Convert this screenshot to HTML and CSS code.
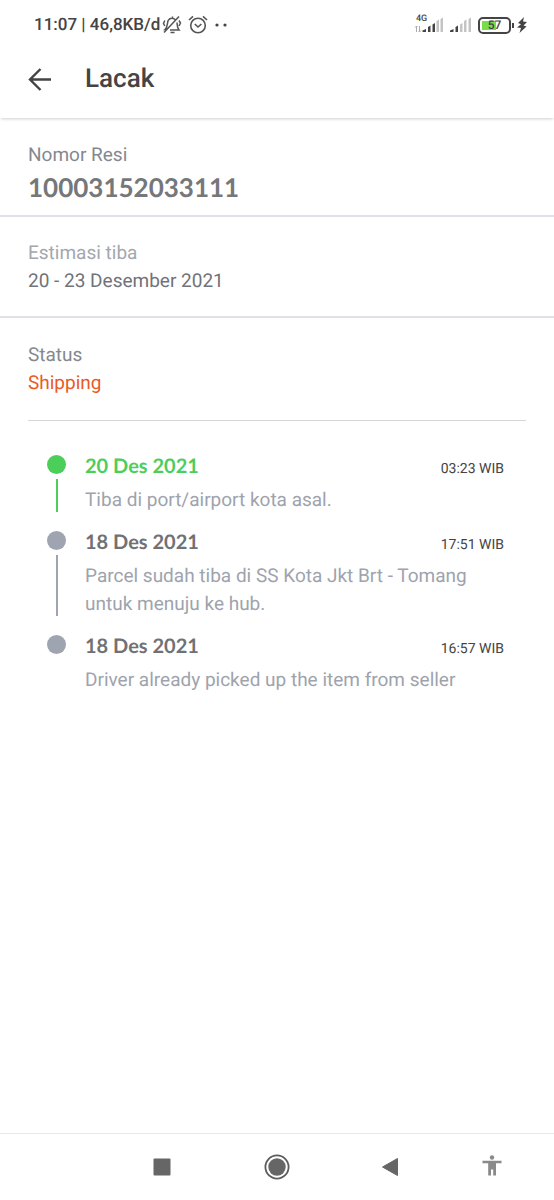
FILE: index.html
```html
<!DOCTYPE html>
<html lang="id">
<head>
<meta charset="utf-8">
<meta name="viewport" content="width=device-width, initial-scale=1">
<title>Lacak</title>
<link rel="stylesheet" href="styles.css">
</head>
<body>
<div class="status-bar">
  <div class="status-left">
    <span class="clock">11:07 | 46,8KB/d</span>
    <svg class="icon-mute" width="20" height="20" viewBox="0 0 20 20" fill="none" stroke="#555" stroke-width="1.5">
      <path d="M14 5.500C12 2.600 8 2.600 6.200 5.400C5 8 6 12 3 14.500H5M8 15H17C15 12.800 15.300 10 15 7.500M8.500 17.500H12.500M10.500 3V1.500M17 1.500L2 17.500M2.800 5.500L1.500 8.500L2.800 11M17 5.500L18.500 8L17 11"/>
    </svg>
    <svg width="20" height="20" viewBox="0 0 20 20" fill="none" stroke="#555" stroke-width="1.600">
      <circle cx="10" cy="10.500" r="7.300"/><path d="M6.800 9L10 12L13.400 9M1 5L5 1.300M15 1.300L19 5"/>
    </svg>
    <svg width="14" height="20" viewBox="0 0 14 20" fill="#444"><circle cx="3" cy="10" r="1.600"/><circle cx="11" cy="10" r="1.600"/></svg>
  </div>
  <div class="status-right">
    <div class="mobile">
      <span class="network">4G</span>
      <svg width="30" height="18" viewBox="0 0 30 18">
        <path d="M2.500 16V10M1 11.500L2.500 10L3.500 11M5.500 10V16M7 14.500L5.500 16L4.500 15" fill="none" stroke="#aaa"/>
        <path d="M8.500 14.500L12 13V16H8.500ZM14 11L16.500 9.500V16H14ZM18.500 8.500L21 7V16H18.500Z" fill="#444"/>
        <path d="M22.500 5L25 3.500V16H22.500ZM26.500 3L29 1.500V16H26.500Z" fill="#c4c4c4"/>
      </svg>
    </div>
    <svg width="22" height="18" viewBox="0 0 22 18">
      <path d="M0 14.500L3.500 13V16H0ZM5.500 11L8 9.500V16H5.500Z" fill="#444"/>
      <path d="M10 8.500L12.500 7V16H10ZM14 5L16.500 3.500V16H14ZM18.500 3L21 1.500V16H18.500Z" fill="#c4c4c4"/>
    </svg>
    <div class="battery"><span class="charge" style="width:57%"></span><span class="percent">57</span></div>
    <svg class="bolt" width="14" height="18" viewBox="0 0 14 18"><path d="M9 1L3 7L6 8.200L2 11.500L6 12L4.500 17L11.500 10.500L8.500 9.500L12 6L8 5.500Z" fill="#444"/></svg>
  </div>
</div>

<header class="app-bar">
  <button class="back" aria-label="Kembali">
    <svg width="24" height="24" viewBox="0 0 24 24" fill="none" stroke="#444" stroke-width="2.400"><path d="M23 11.500H2.500M12.500 1L2 11.500L12.500 22"/></svg>
  </button>
  <h1 class="title">Lacak</h1>
</header>

<main class="content">
  <section class="info receipt">
    <h2 class="label">Nomor Resi</h2>
    <p class="number">10003152033111</p>
  </section>
  <section class="info estimate">
    <h2 class="label label-light">Estimasi tiba</h2>
    <p class="value">20 - 23 Desember 2021</p>
  </section>
  <section class="state">
    <h2 class="label">Status</h2>
    <p class="value value-shipping">Shipping</p>
  </section>
  <ol class="timeline">
    <li class="event event-active">
      <div class="rail"><span class="dot"></span><span class="line"></span></div>
      <div class="details">
        <div class="event-head"><h3 class="date">20 Des 2021</h3><time class="time">03:23 WIB</time></div>
        <p class="text">Tiba di port/airport kota asal.</p>
      </div>
    </li>
    <li class="event">
      <div class="rail"><span class="dot"></span><span class="line"></span></div>
      <div class="details">
        <div class="event-head"><h3 class="date">18 Des 2021</h3><time class="time">17:51 WIB</time></div>
        <p class="text">Parcel sudah tiba di SS Kota Jkt Brt - Tomang untuk menuju ke hub.</p>
      </div>
    </li>
    <li class="event">
      <div class="rail"><span class="dot"></span></div>
      <div class="details">
        <div class="event-head"><h3 class="date">18 Des 2021</h3><time class="time">16:57 WIB</time></div>
        <p class="text">Driver already picked up the item from seller</p>
      </div>
    </li>
  </ol>
</main>

<nav class="nav-bar">
  <button class="nav-button" aria-label="Aplikasi terbaru"><svg width="28" height="28" viewBox="0 0 28 28"><rect x="5.500" y="5.500" width="17" height="17" rx="1" fill="#666"/></svg></button>
  <button class="nav-button" aria-label="Beranda"><svg width="28" height="28" viewBox="0 0 28 28"><circle cx="15" cy="14" r="11.600" fill="none" stroke="#5c5c5c" stroke-width="1.800"/><circle cx="15" cy="14" r="8.700" fill="#666"/></svg></button>
  <button class="nav-button" aria-label="Kembali"><svg width="28" height="28" viewBox="0 0 28 28"><path d="M6.500 14L21.500 5.500V22.500Z" fill="#666" stroke="#666" stroke-linejoin="round"/></svg></button>
  <button class="nav-button" aria-label="Aksesibilitas"><svg width="28" height="28" viewBox="0 0 28 28" fill="#8a8a8a"><circle cx="14" cy="4.500" r="2.200"/><path d="M4.500 7.800H23.500V10.200H18V22.500H15.200V16.500H13V22.500H10.200V10.200H4.500Z"/></svg></button>
</nav>
</body>
</html>
```
FILE: styles.css
```css
* { box-sizing: border-box; }
body {
  margin: 0;
  min-height: 100vh;
  display: flex;
  flex-direction: column;
  background: #fff;
  color: #444;
  font-family: Roboto, "Liberation Sans", sans-serif;
  text-rendering: geometricPrecision;
}
h1, h2, h3, p, ol { margin: 0; padding: 0; }
button { border: 0; padding: 0; background: none; display: flex; }
svg { display: block; flex: none; }

.status-bar {
  height: 48px;
  padding: 2px 25px 0 34px;
  display: flex;
  justify-content: space-between;
  align-items: center;
}
.status-left { display: flex; align-items: center; gap: 6px; }
.clock { font-size: 17px; font-weight: 500; line-height: 20px; white-space: nowrap; }
.icon-mute { margin-left: -4px; }
.status-right { display: flex; align-items: center; gap: 6px; }
.mobile { position: relative; }
.network {
  position: absolute;
  left: 2px;
  top: -1px;
  font-size: 9px;
  font-weight: 500;
  line-height: 8px;
}
.battery {
  position: relative;
  width: 33px;
  height: 17px;
  border: 2px solid #444;
  border-radius: 5px;
  padding: 2px;
}
.battery::after {
  content: "";
  position: absolute;
  right: -5px;
  top: 4px;
  width: 2px;
  height: 5px;
  background: #444;
}
.charge { display: block; height: 100%; background: #78dc4b; }
.percent {
  position: absolute;
  inset: 0;
  font-size: 12px;
  font-weight: 500;
  line-height: 13px;
  text-align: center;
}
.bolt { margin-left: -2px; }

.app-bar {
  height: 70px;
  padding: 0 28px 7px;
  display: flex;
  align-items: center;
  gap: 33px;
  box-shadow: 0 2px 3px -1px #00000030;
}
.title { font-size: 26px; font-weight: 500; line-height: 33px; }

.content { flex: 1; }
.info { padding-left: 28px; padding-right: 28px; border-bottom: 2px solid #dfe1e8; }
.receipt { padding-top: 23px; padding-bottom: 10px; }
.estimate { padding-top: 22px; padding-bottom: 21px; }
.state { margin: 0 28px; padding: 23px 0; border-bottom: 1px solid #d4d6da; }
.label { font-size: 19px; font-weight: 400; line-height: 28px; color: #85888f; }
.label-light { color: #a3a7ae; }
.number {
  font-family: Lato, "Open Sans", sans-serif;
  font-size: 26px;
  font-weight: 700;
  line-height: 36px;
  color: #75777a;
}
.value { font-size: 19px; line-height: 28px; color: #707378; }
.value-shipping { color: #e95a25; }

.timeline { list-style: none; padding: 31px 50px 0 47px; }
.event { display: flex; gap: 19px; color: #9ea5b0; }
.event-active { color: #4cce5b; }
.rail {
  width: 19px;
  padding: 3px 0 16px;
  display: flex;
  flex-direction: column;
  align-items: center;
  gap: 5px;
}
.dot { width: 19px; height: 19px; border-radius: 50%; background: currentColor; }
.line { flex: 1; width: 2px; background: currentColor; }
.details { flex: 1; padding-bottom: 14px; }
.event-head { display: flex; justify-content: space-between; align-items: baseline; }
.date {
  font-family: Lato, "Open Sans", sans-serif;
  font-size: 20px;
  font-weight: 700;
  line-height: 28px;
  color: #707174;
}
.event-active .date { color: #4cce5b; }
.time { font-size: 14px; line-height: 20px; color: #444; }
.text { margin-top: 6px; font-size: 19px; line-height: 28px; color: #9ea3ad; }

.nav-bar {
  height: 67px;
  padding: 0 17px 0 105px;
  border-top: 1px solid #e8e8e8;
  display: grid;
  grid-template-columns: 19fr 19fr 19fr 15fr;
  align-items: center;
}
.nav-button { justify-content: center; }
```
